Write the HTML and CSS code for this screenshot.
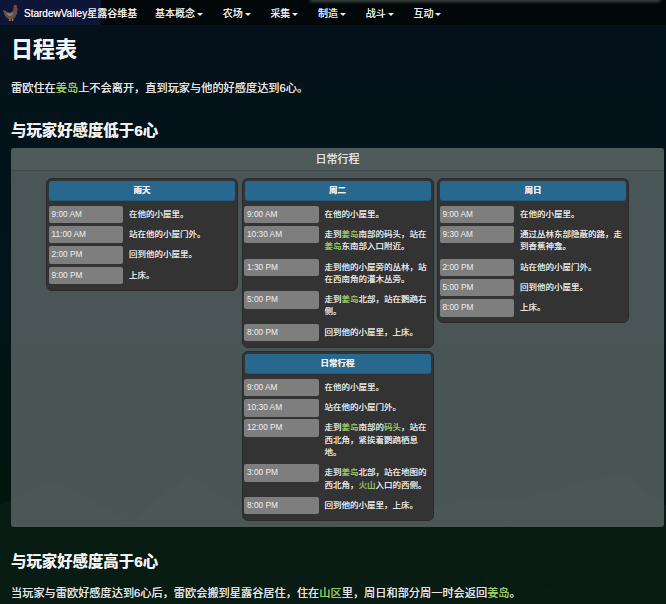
FILE: index.html
```html
<!DOCTYPE html>
<html lang="zh">
<head>
<meta charset="utf-8">
<title>日程表</title>
<link rel="stylesheet" href="styles.css">
</head>
<body>
<svg class="mountains" viewBox="0 0 666 604" preserveAspectRatio="none" aria-hidden="true">
  <path class="ridge-far" d="M0 505L52 480 85 497 130 522 188 475 240 510 330 522 400 512 470 500 530 497 590 480 625 475 650 495 666 505V604H0Z"/>
  <path class="ridge-near" d="M0 565L60 535 120 590 200 545 300 600 400 570 470 545 540 590 620 560 666 585V604H0Z"/>
</svg>
<nav class="navbar">
  <div class="ghost" aria-hidden="true"></div>
  <a class="brand"><svg class="logo" viewBox="0 0 18 17" aria-hidden="true"><path class="logo-body" d="M0 5l3 1 2 2 3 0 3-2 0-3 2-1 2 1 1 2-1 1 0 3-2 4-3 2-4 0-3-2-2-4z"/><path class="logo-shade" d="M3 8l5 1 3-1-1 3-4 1z"/><path class="logo-comb" d="M11 2l1-2 2 0 1 2-1 1z"/><path class="logo-leg" d="M7 14h1v3H6zM10 14h1v3H9z"/></svg><span>StardewValley星露谷维基</span></a>
  <ul class="menu">
    <li>基本概念<i></i></li>
    <li>农场<i></i></li>
    <li>采集<i></i></li>
    <li>制造<i></i></li>
    <li>战斗<i></i></li>
    <li>互动<i></i></li>
  </ul>
</nav>
<main class="content">
  <h1>日程表</h1>
  <p class="intro">雷欧住在<a>姜岛</a>上不会离开，直到玩家与他的好感度达到6心。</p>
  <h2 class="h-low">与玩家好感度低于6心</h2>
  <section class="panel">
    <header class="panel-head">日常行程</header>
    <div class="panel-body">
      <div class="col">
        <article class="card">
          <h3>雨天</h3>
          <div class="row"><span class="time">9:00 AM</span><span class="desc">在他的小屋里。</span></div>
          <div class="row"><span class="time">11:00 AM</span><span class="desc">站在他的小屋门外。</span></div>
          <div class="row"><span class="time">2:00 PM</span><span class="desc">回到他的小屋里。</span></div>
          <div class="row"><span class="time">9:00 PM</span><span class="desc">上床。</span></div>
        </article>
      </div>
      <div class="col">
        <article class="card">
          <h3>周二</h3>
          <div class="row"><span class="time">9:00 AM</span><span class="desc">在他的小屋里。</span></div>
          <div class="row"><span class="time">10:30 AM</span><span class="desc">走到<a>姜岛</a>南部的码头，站在<a>姜岛</a>东南部入口附近。</span></div>
          <div class="row"><span class="time">1:30 PM</span><span class="desc">走到他的小屋旁的丛林，站在西南角的灌木丛旁。</span></div>
          <div class="row"><span class="time">5:00 PM</span><span class="desc">走到<a>姜岛</a>北部，站在鹦鹉右侧。</span></div>
          <div class="row"><span class="time">8:00 PM</span><span class="desc">回到他的小屋里，上床。</span></div>
        </article>
        <article class="card">
          <h3>日常行程</h3>
          <div class="row"><span class="time">9:00 AM</span><span class="desc">在他的小屋里。</span></div>
          <div class="row"><span class="time">10:30 AM</span><span class="desc">站在他的小屋门外。</span></div>
          <div class="row"><span class="time">12:00 PM</span><span class="desc">走到<a>姜岛</a>南部的<a>码头</a>，站在西北角，紧挨着鹦鹉栖息地。</span></div>
          <div class="row"><span class="time">3:00 PM</span><span class="desc">走到<a>姜岛</a>北部，站在地图的西北角，<a>火山</a>入口的西侧。</span></div>
          <div class="row"><span class="time">8:00 PM</span><span class="desc">回到他的小屋里，上床。</span></div>
        </article>
      </div>
      <div class="col">
        <article class="card">
          <h3>周日</h3>
          <div class="row"><span class="time">9:00 AM</span><span class="desc">在他的小屋里。</span></div>
          <div class="row"><span class="time">9:30 AM</span><span class="desc">通过丛林东部隐蔽的路，走到香蕉神龛。</span></div>
          <div class="row"><span class="time">2:00 PM</span><span class="desc">站在他的小屋门外。</span></div>
          <div class="row"><span class="time">5:00 PM</span><span class="desc">回到他的小屋里。</span></div>
          <div class="row"><span class="time">8:00 PM</span><span class="desc">上床。</span></div>
        </article>
      </div>
    </div>
  </section>
  <h2 class="h-high">与玩家好感度高于6心</h2>
  <p class="outro">当玩家与雷欧好感度达到6心后，雷欧会搬到星露谷居住，住在<a>山区</a>里，周日和部分周一时会返回<a>姜岛</a>。</p>
</main>
</body>
</html>
```
FILE: styles.css
```css
* { box-sizing: border-box; }
html, body { margin: 0; height: 604px; overflow: hidden; }
body {
  position: relative;
  background: linear-gradient(180deg, #04111a 0%, #04141b 45%, #04140f 78%, #05150e 100%);
  color: #e8e8e8;
  font-family: "Liberation Sans", "Noto Sans CJK SC", sans-serif;
  text-shadow: 0 0 .6px currentColor;
}
.mountains { position: absolute; inset: 0; width: 666px; height: 604px; }
.ridge-far { fill: #0a1f17; opacity: .6; }
.ridge-near { fill: #0c2213; opacity: .3; }

.navbar {
  position: relative;
  display: flex;
  align-items: center;
  height: 25px;
  overflow: hidden;
  background: #02070a;
  color: #eee;
  font-size: 10px;
}
.ghost {
  position: absolute;
  top: -2px;
  left: 310px;
  width: 350px;
  height: 4px;
  background: #55605a;
  opacity: .7;
  filter: blur(1.5px);
}
.brand {
  position: relative;
  display: flex;
  align-items: center;
  height: 100%;
  width: 144px;
  padding-left: 3px;
  font-size: 10px;
  font-weight: 400;
  color: #f2f2f2;
  background: linear-gradient(90deg, #0e1638 0, #0e1638 100px, #02070a 102px);
}
.logo { width: 17px; height: 16px; margin-right: 4px; flex: none; }
.logo-body { fill: #5f504c; }
.logo-shade { fill: #8a7a72; }
.logo-comb { fill: #b5382c; }
.logo-leg { fill: #c0702f; }
.menu { position: relative; display: flex; gap: 19.7px; list-style: none; margin: 0; padding: 0 0 0 11px; }
.menu li { white-space: nowrap; }
.menu i {
  display: inline-block;
  margin-left: 2px;
  vertical-align: 1px;
  border: 3px solid transparent;
  border-top-color: #eee;
  border-bottom: 0;
}

.content { position: relative; padding: 0 2px 0 11px; }
a { color: #9ccc65; }
h1 { margin: 12px 0 0; font-size: 22px; line-height: 26px; color: #f4f4f4; }
.intro { margin: 16px 0 0; font-size: 11.2px; line-height: 18px; color: #e6e6e6; }
h2 { margin: 0; font-size: 15.4px; line-height: 18px; color: #f2f2f2; }
.h-low { margin-top: 25px; }
.h-high { margin-top: 26px; }
.outro { margin: 13px 0 0; font-size: 11.2px; line-height: 18px; color: #e6e6e6; white-space: nowrap; }

.panel { margin-top: 8px; border-radius: 3px; background: rgba(94, 104, 104, .78); }
.panel-head {
  height: 23px;
  border-bottom: 1px solid #3c4a4b;
  background: rgba(100, 110, 112, .2);
  text-align: center;
  font-size: 11px;
  line-height: 23px;
  color: #e4e4e4;
}
.panel-body {
  display: grid;
  grid-template-columns: repeat(3, 192px);
  justify-content: center;
  gap: 3.5px;
  align-items: start;
  padding: 7px 0 6px;
}
.col { display: flex; flex-direction: column; gap: 3px; }
.card {
  padding: 2px 1.5px 3px;
  border-radius: 6px;
  background: #333;
  border: 1px solid #2a2a2a;
  font-size: 8.5px;
  color: #e6e6e6;
}
.card h3 {
  margin: 0 .5px 4.7px;
  height: 20px;
  border-radius: 3px;
  background: #28688f;
  border-bottom: 1px solid #225a7c;
  text-align: center;
  font-size: 8.5px;
  line-height: 19px;
  font-weight: 700;
  color: #eee;
}
.row { display: grid; grid-template-columns: 74.5px 1fr; column-gap: 6px; }
.time {
  height: 17.5px;
  padding-left: 3px;
  border-radius: 2px;
  background: #7e7e7e;
  font-size: 8.3px;
  line-height: 16px;
  color: #f0f0f0;
  text-shadow: none;
}
.desc { padding: 2px 0 6px; line-height: 12.3px; }
```
